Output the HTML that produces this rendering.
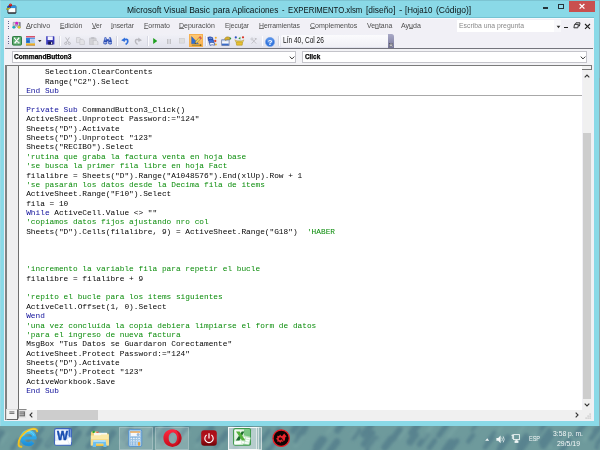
<!DOCTYPE html>
<html><head><meta charset="utf-8"><title>Microsoft Visual Basic para Aplicaciones</title>
<style>
html,body{margin:0;padding:0}
body{width:600px;height:450px;overflow:hidden;position:relative;background:#6e9a9c;font-family:"Liberation Sans",sans-serif}
div,span.a,svg{position:absolute;box-sizing:border-box}
.t{white-space:pre;line-height:1}
#frame{left:0;top:0;width:598.8px;height:425.8px;background:#8ad9e7;border-top:.8px solid #7cc4d2;border-left:.8px solid #9cdae6}
#client{left:4.4px;top:17.7px;width:589.5px;height:403.7px;background:#f1f0f6}
.menu{top:22px;font-size:7.3px;color:#4e4e4e;white-space:pre;line-height:1.15}
.menu u{text-decoration-thickness:.55px;text-underline-offset:.3px;text-decoration-color:#777}
#code{left:19.3px;top:65.8px;width:563.2px;height:344.4px;background:#fff}
.ln{left:6.9px;height:9.375px;font:7.8125px/9.375px "Liberation Mono",monospace;color:#050505;white-space:pre}
.k{color:#10109a}
.c{color:#0a8c0a}
.sep{width:1.6px;top:36.3px;height:9.4px;background:linear-gradient(90deg,#d6d7e2 0 50%,#fcfcfe 50% 100%)}
</style></head><body>
<div id="root" style="left:-6px;top:-6px;width:612px;height:462px;overflow:hidden;filter:blur(.35px);background:#6e9a9c">
<div style="left:0;top:0;width:612px;height:431.8px;background:#86b6c2"></div>
<div style="left:0;top:0;width:604.8px;height:431.8px;background:#8ad9e7"></div>
<div id="inner" style="left:6px;top:6px;width:600px;height:450px">
<div id="taskbar" style="left:0;top:425.8px;width:600px;height:24.2px;background:#6e9a9c;overflow:hidden">
<svg width="600" height="25" viewBox="0 0 600 25" style="left:0;top:0">
<defs><filter id="bl" x="-5%" y="-50%" width="110%" height="200%"><feGaussianBlur stdDeviation="1.6"/></filter></defs>
<g filter="url(#bl)"><g stroke="#4c7486" opacity=".62" fill="none" stroke-linecap="round"><path d="M-7.8 11.1 l5.5 -7.4" stroke-width="4.2"/><path d="M-18.4 15.8 l6.6 -8.7" stroke-width="5.5"/><path d="M-3.0 13.5 l5.1 -6.8" stroke-width="5.3"/><path d="M-7.9 22.2 l5.4 -7.2" stroke-width="5.9"/><path d="M26.8 16.7 l6.7 -8.9" stroke-width="4.1"/><path d="M12.2 22.9 l6.2 -8.3" stroke-width="4.4"/><path d="M33.9 22.0 l5.7 -7.6" stroke-width="5.9"/><path d="M35.0 12.2 l7.4 -9.9" stroke-width="4.2"/><path d="M47.8 19.0 l6.9 -9.1" stroke-width="5.8"/><path d="M57.3 14.0 l6.2 -8.3" stroke-width="6.1"/><path d="M71.5 16.6 l7.3 -9.8" stroke-width="6.2"/><path d="M67.1 10.3 l9.5 -12.7" stroke-width="5.3"/><path d="M88.2 7.3 l7.1 -9.5" stroke-width="6.0"/><path d="M88.1 20.8 l7.6 -10.1" stroke-width="4.9"/><path d="M105.2 17.1 l7.6 -10.1" stroke-width="6.5"/><path d="M101.9 24.8 l7.1 -9.4" stroke-width="4.2"/><path d="M128.0 18.2 l9.6 -12.8" stroke-width="4.9"/><path d="M122.7 12.5 l8.0 -10.7" stroke-width="5.4"/><path d="M150.6 6.6 l5.1 -6.8" stroke-width="4.4"/><path d="M149.7 9.4 l6.7 -8.9" stroke-width="4.2"/><path d="M161.1 16.1 l9.0 -12.1" stroke-width="6.6"/><path d="M160.1 10.1 l6.8 -9.1" stroke-width="6.7"/><path d="M182.3 7.3 l5.6 -7.5" stroke-width="4.7"/><path d="M177.2 14.7 l7.6 -10.2" stroke-width="4.0"/><path d="M204.1 12.1 l7.5 -10.0" stroke-width="6.1"/><path d="M198.4 15.3 l7.8 -10.4" stroke-width="4.2"/><path d="M216.6 21.2 l9.0 -12.0" stroke-width="5.2"/><path d="M220.9 12.8 l5.3 -7.1" stroke-width="4.2"/><path d="M234.1 8.6 l5.6 -7.4" stroke-width="4.2"/><path d="M234.7 4.0 l5.5 -7.4" stroke-width="5.1"/><path d="M234.1 23.2 l7.7 -10.3" stroke-width="4.8"/><path d="M242.4 11.6 l6.5 -8.7" stroke-width="6.5"/><path d="M262.0 14.3 l7.1 -9.5" stroke-width="4.3"/><path d="M272.9 11.5 l6.1 -8.1" stroke-width="4.5"/><path d="M267.9 24.9 l7.3 -9.8" stroke-width="5.6"/><path d="M293.1 4.6 l7.3 -9.8" stroke-width="6.6"/><path d="M298.8 9.7 l6.6 -8.7" stroke-width="6.3"/><path d="M296.3 15.7 l8.5 -11.4" stroke-width="4.7"/><path d="M314.8 25.7 l8.9 -11.9" stroke-width="6.5"/><path d="M315.4 20.3 l5.9 -7.9" stroke-width="5.1"/><path d="M337.3 4.6 l6.1 -8.2" stroke-width="6.1"/><path d="M330.1 25.0 l6.9 -9.3" stroke-width="7.0"/><path d="M353.0 12.0 l5.9 -7.8" stroke-width="4.6"/><path d="M363.7 8.5 l7.8 -10.4" stroke-width="6.5"/><path d="M363.8 18.4 l8.6 -11.5" stroke-width="6.0"/><path d="M367.6 24.0 l8.6 -11.4" stroke-width="5.4"/><path d="M384.8 21.4 l6.4 -8.5" stroke-width="6.9"/><path d="M393.0 12.7 l6.7 -9.0" stroke-width="6.2"/><path d="M411.5 6.8 l5.5 -7.4" stroke-width="6.4"/><path d="M412.1 7.2 l8.8 -11.7" stroke-width="6.0"/><path d="M410.0 16.1 l5.4 -7.2" stroke-width="6.9"/><path d="M419.4 18.3 l7.3 -9.8" stroke-width="5.3"/><path d="M429.1 22.2 l5.8 -7.8" stroke-width="4.9"/><path d="M438.9 9.3 l7.6 -10.2" stroke-width="5.3"/><path d="M444.4 24.0 l6.5 -8.7" stroke-width="5.8"/><path d="M450.0 23.9 l6.8 -9.1" stroke-width="5.5"/><path d="M468.3 15.5 l4.9 -6.5" stroke-width="4.5"/><path d="M473.7 4.1 l8.6 -11.5" stroke-width="5.4"/><path d="M488.3 16.2 l6.4 -8.5" stroke-width="5.7"/><path d="M485.0 21.3 l5.3 -7.1" stroke-width="4.7"/><path d="M500.7 21.0 l7.2 -9.6" stroke-width="6.3"/><path d="M499.0 24.1 l6.9 -9.2" stroke-width="5.5"/><path d="M519.3 19.2 l7.0 -9.3" stroke-width="5.4"/><path d="M519.3 24.7 l8.2 -10.9" stroke-width="6.8"/><path d="M540.5 16.3 l9.3 -12.4" stroke-width="4.4"/><path d="M538.5 6.7 l6.9 -9.2" stroke-width="4.7"/><path d="M553.0 18.7 l8.6 -11.4" stroke-width="4.5"/><path d="M543.2 19.8 l8.0 -10.6" stroke-width="6.6"/><path d="M576.2 8.8 l9.4 -12.5" stroke-width="5.5"/><path d="M560.6 25.8 l8.8 -11.7" stroke-width="5.3"/><path d="M590.9 11.5 l5.7 -7.7" stroke-width="6.2"/><path d="M597.6 4.4 l7.5 -9.9" stroke-width="4.1"/><path d="M599.1 17.7 l7.3 -9.7" stroke-width="7.0"/><path d="M596.9 21.3 l9.5 -12.6" stroke-width="4.8"/><path d="M610.7 21.1 l6.1 -8.1" stroke-width="5.3"/><path d="M610.1 24.1 l8.7 -11.6" stroke-width="4.4"/></g>
<g stroke="#7eaaa8" opacity=".5" fill="none" stroke-linecap="round"><path d="M0.7 17.4 l7.3 -9.8" stroke-width="2.6"/><path d="M17.6 19.8 l6.3 -8.4" stroke-width="2.6"/><path d="M47.7 18.7 l7.7 -10.2" stroke-width="2.6"/><path d="M84.5 7.3 l7.9 -10.5" stroke-width="3.2"/><path d="M99.2 17.1 l8.1 -10.8" stroke-width="2.9"/><path d="M119.2 16.5 l5.7 -7.5" stroke-width="2.7"/><path d="M146.3 7.0 l5.5 -7.4" stroke-width="3.0"/><path d="M157.3 21.2 l5.8 -7.8" stroke-width="3.3"/><path d="M183.6 12.9 l4.9 -6.5" stroke-width="2.9"/><path d="M196.0 20.7 l6.8 -9.0" stroke-width="2.8"/><path d="M216.7 24.7 l5.2 -6.9" stroke-width="3.7"/><path d="M246.5 15.9 l7.8 -10.4" stroke-width="3.1"/><path d="M267.7 19.8 l8.3 -11.1" stroke-width="3.0"/><path d="M295.4 20.1 l7.1 -9.5" stroke-width="3.1"/><path d="M327.3 7.1 l5.3 -7.0" stroke-width="2.6"/><path d="M351.2 11.1 l5.4 -7.2" stroke-width="2.6"/><path d="M370.1 23.4 l7.2 -9.6" stroke-width="2.9"/><path d="M399.6 11.9 l6.5 -8.6" stroke-width="2.7"/><path d="M423.4 11.3 l8.3 -11.0" stroke-width="4.0"/><path d="M448.3 10.9 l8.3 -11.0" stroke-width="3.0"/><path d="M474.2 6.0 l6.2 -8.2" stroke-width="3.2"/><path d="M495.2 10.0 l6.6 -8.8" stroke-width="2.5"/><path d="M518.1 7.8 l6.2 -8.3" stroke-width="2.6"/><path d="M533.1 12.1 l5.6 -7.5" stroke-width="3.4"/><path d="M550.8 21.0 l7.2 -9.6" stroke-width="3.6"/><path d="M584.7 13.8 l6.0 -8.0" stroke-width="4.0"/><path d="M599.5 20.5 l7.1 -9.5" stroke-width="2.6"/></g></g>
</svg></div>
<div style="left:598.8px;top:0;width:1.2px;height:426px;background:#86b6c2"></div>
<div style="left:598.8px;top:78px;width:1.2px;height:348px;background:#8faab0"></div>
<div id="frame"></div>
<div style="left:4px;top:16.9px;width:590.4px;height:.9px;background:#74c3d3"></div>
<div id="client"></div>
<div style="left:4.4px;top:17.7px;width:589.5px;height:1.2px;background:#f9f9fc"></div>
<div class="t" style="left:126.7px;top:5.6px;font-size:8.8px;color:#0c1416"><span id="ts0" style="display:inline-block;transform:scaleX(0.9663);transform-origin:0 0;">Microsoft Visual Basic</span> </div>
<div class="t" style="left:213.3px;top:5.6px;font-size:8.8px;color:#0c1416"><span id="ts1" style="display:inline-block;transform:scaleX(0.9597);transform-origin:0 0;">para</span> </div>
<div class="t" style="left:232.0px;top:5.6px;font-size:8.8px;color:#0c1416"><span id="ts2" style="display:inline-block;transform:scaleX(0.9374);transform-origin:0 0;">Aplicaciones</span> </div>
<div class="t" style="left:281.7px;top:5.6px;font-size:8.8px;color:#0c1416"><span id="ts3" style="display:inline-block;transform:scaleX(0.8511);transform-origin:0 0;">-</span> </div>
<div class="t" style="left:288.0px;top:5.6px;font-size:8.8px;color:#0c1416"><span id="ts4" style="display:inline-block;transform:scaleX(0.8791);transform-origin:0 0;">EXPERIMENTO.xlsm</span> </div>
<div class="t" style="left:365.7px;top:5.6px;font-size:8.8px;color:#0c1416"><span id="ts5" style="display:inline-block;transform:scaleX(0.9509);transform-origin:0 0;">[diseño]</span> </div>
<div class="t" style="left:399.0px;top:5.6px;font-size:8.8px;color:#0c1416"><span id="ts6" style="display:inline-block;transform:scaleX(1.1574);transform-origin:0 0;">-</span> </div>
<div class="t" style="left:405.0px;top:5.6px;font-size:8.8px;color:#0c1416"><span id="ts7" style="display:inline-block;transform:scaleX(0.9035);transform-origin:0 0;">[Hoja10</span> </div>
<div class="t" style="left:436.0px;top:5.6px;font-size:8.8px;color:#0c1416"><span id="ts8" style="display:inline-block;transform:scaleX(0.9727);transform-origin:0 0;">(Código)]</span> </div>
<svg style="left:5.5px;top:3px" width="11" height="11" viewBox="0 0 11 11">
<rect x="1.9" y="3" width="8" height="7.2" rx=".6" fill="#fdfdfd" stroke="#2a3038" stroke-width=".9"/>
<rect x="3.4" y="2.8" width="6.6" height="2.3" fill="#2a8fe0"/>
<rect x="1.9" y="9.4" width="8" height="1" fill="#20242a"/>
<path d="M.4 5.8 L3.6 4.2 L4.2 5.4 L1 7z" fill="#e6d616" stroke="#4a4a10" stroke-width=".35"/>
<circle cx="2.6" cy="3.8" r="1.1" fill="#1c3cc8"/>
<circle cx="4.5" cy="2" r="1.55" fill="#cc1414"/><circle cx="4.2" cy="1.6" r=".5" fill="#f06060"/>
<path d="M3.4 3.4 L5 4.4" stroke="#101010" stroke-width=".7"/>
</svg>
<div style="left:568.5px;top:.8px;width:26.2px;height:11px;background:#c9504f"></div>
<svg style="left:577.5px;top:3px" width="8" height="7" viewBox="0 0 8 7"><path d="M1.6 1 L6.4 5.6 M6.4 1 L1.6 5.6" stroke="#fff" stroke-width="1.3" fill="none"/></svg>
<div style="left:558px;top:4px;width:6px;height:4.8px;border:.9px solid #25343a;border-top-width:1.6px;background:#8fdcec"></div>
<div style="left:542.6px;top:7.2px;width:5px;height:1.5px;background:#25343a"></div>
<div style="left:8.2px;top:21px;width:1.1px;height:9px;background:repeating-linear-gradient(#62628c 0 1.1px,transparent 1.1px 2.3px)"></div>
<svg style="left:11.6px;top:21px" width="9" height="8.4" viewBox="0 0 9 8.4">
<path d="M1.2 1.4 H7.8 V7 H6 L4.6 4.4 L3.2 7 H1.2z" fill="#d4d4dc" stroke="#7a7a8c" stroke-width=".6"/>
<path d="M8 1.2 V7.2" stroke="#3a3a4a" stroke-width=".7"/>
<path d="M4.7 2.3 L1.8 6.3 M4.7 2.3 L7.1 6.2" stroke="#55555f" stroke-width=".6"/>
<circle cx="4.7" cy="2.2" r="1.4" fill="#d418cc"/><circle cx="1.7" cy="6.3" r="1.3" fill="#12b4c4"/><circle cx="7.1" cy="6.2" r="1.3" fill="#dcd418"/>
</svg>
<div class="menu" id="m0" style="display:inline-block;transform:scaleX(0.9941);transform-origin:0 0;left:26.0px"><u>A</u>rchivo</div>
<div class="menu" id="m1" style="display:inline-block;transform:scaleX(0.9268);transform-origin:0 0;left:60.0px"><u>E</u>dición</div>
<div class="menu" id="m2" style="display:inline-block;transform:scaleX(0.9117);transform-origin:0 0;left:91.7px"><u>V</u>er</div>
<div class="menu" id="m3" style="display:inline-block;transform:scaleX(0.9253);transform-origin:0 0;left:111.3px"><u>I</u>nsertar</div>
<div class="menu" id="m4" style="display:inline-block;transform:scaleX(0.9563);transform-origin:0 0;left:143.7px"><u>F</u>ormato</div>
<div class="menu" id="m5" style="display:inline-block;transform:scaleX(0.9587);transform-origin:0 0;left:179.2px"><u>D</u>epuración</div>
<div class="menu" id="m6" style="display:inline-block;transform:scaleX(0.8956);transform-origin:0 0;left:224.7px">Ejecu<u>t</u>ar</div>
<div class="menu" id="m7" style="display:inline-block;transform:scaleX(0.9358);transform-origin:0 0;left:258.7px"><u>H</u>erramientas</div>
<div class="menu" id="m8" style="display:inline-block;transform:scaleX(0.9635);transform-origin:0 0;left:309.7px"><u>C</u>omplementos</div>
<div class="menu" id="m9" style="display:inline-block;transform:scaleX(0.9441);transform-origin:0 0;left:366.7px">Ve<u>n</u>tana</div>
<div class="menu" id="m10" style="display:inline-block;transform:scaleX(0.9670);transform-origin:0 0;left:401.3px">Ay<u>u</u>da</div>
<div style="left:456.5px;top:19.6px;width:104.5px;height:12px;background:#f8f8fb"></div>
<div style="left:456.5px;top:19.6px;width:97.5px;height:12px;background:#fff"></div>
<div class="t" id="ask" style="display:inline-block;transform:scaleX(0.9513);transform-origin:0 0;left:459px;top:21.8px;font-size:7.2px;color:#8a8a8a">Escriba una pregunta</div>
<svg style="left:555.5px;top:24.5px" width="5" height="4" viewBox="0 0 5 4"><path d="M.6 .8 H4.4 L2.5 3.2z" fill="#333"/></svg>
<div style="left:564px;top:27px;width:4px;height:1.3px;background:#222"></div>
<svg style="left:572.5px;top:22.3px" width="8" height="7" viewBox="0 0 8 7"><path d="M2.4 2.2 L3 .8 H7 L6.4 4 H5.2 M.9 5.8 L1.5 2.4 H5.4 L4.8 5.8z" stroke="#222" stroke-width=".9" fill="none"/></svg>
<svg style="left:584.2px;top:22.6px" width="7" height="7" viewBox="0 0 7 7"><path d="M1 1 L6 5.8 M6 1 L1 5.8" stroke="#222" stroke-width="1.1" fill="none"/></svg>
<div style="left:4.5px;top:33.6px;width:389.3px;height:14.2px;background:linear-gradient(#f1f1f7,#e1e2ec);border-radius:0 2.5px 0 0"></div>
<div style="left:387.5px;top:33.6px;width:6.3px;height:14.2px;background:linear-gradient(#a9a9c6,#77779a);border-radius:0 2.5px 0 0"></div>
<svg style="left:388.5px;top:43px" width="4" height="4" viewBox="0 0 4 4"><rect x=".3" y=".3" width="3.4" height="3.4" fill="#eee" stroke="#334" stroke-width=".5"/><path d="M1 1.5 H3 L2 2.8z" fill="#223"/></svg>
<div style="left:8.4px;top:36.2px;width:1.1px;height:9px;background:repeating-linear-gradient(#62628c 0 1.1px,transparent 1.1px 2.3px)"></div>
<div class="sep" style="left:59.2px"></div>
<div class="sep" style="left:116.2px"></div>
<div class="sep" style="left:147.2px"></div>
<div class="sep" style="left:205.0px"></div>
<div class="sep" style="left:261.7px"></div>
<div class="sep" style="left:278.2px"></div>
<svg style="left:12.0px;top:36.0px" width="10" height="9.6" viewBox="0 0 10 9.6"><rect x=".5" y=".5" width="9" height="8.6" rx=".8" fill="#55a868" stroke="#2f7a40" stroke-width="1"/>
<path d="M1.5 5.2 H8.5 M1.5 7 H8.5 M5 4 V8.4" stroke="#9fd0aa" stroke-width=".5"/>
<path d="M2.2 1.8 L7.4 7.2 M7.2 1.6 L2.6 7.4" stroke="#fff" stroke-width="1.5"/><path d="M3.2 2 L7.2 6.6" stroke="#2f7a40" stroke-width=".5"/></svg>
<svg style="left:25.5px;top:36.0px" width="9.6" height="9.6" viewBox="0 0 9.6 9.6"><rect x="0" y="0" width="9.6" height="9.6" fill="#2f7ddc"/>
<rect x="0" y="0" width="9.6" height="1.6" fill="#d8506a"/><rect x="0" y="1.5" width="9.6" height=".5" fill="#f0d0d8"/>
<rect x="4.2" y="3" width="4.6" height="3.6" fill="#a8c8f0" stroke="#e8f0ff" stroke-width=".5"/><rect x="1" y="4.6" width="2.4" height="1.6" fill="#1e5cb8"/>
<rect x="0" y="7.4" width="9.6" height="2.2" fill="#f0a828"/><rect x="0" y="7.2" width="9.6" height=".6" fill="#f8e070"/></svg>
<svg style="left:38.4px;top:40.0px" width="3.6" height="2.2" viewBox="0 0 3.6 2.2"><path d="M0 .1 H3.6 L1.8 2.1z" fill="#333"/></svg>
<svg style="left:46.0px;top:36.4px" width="8.6" height="8.8" viewBox="0 0 8.6 8.8"><rect x=".2" y=".2" width="8.2" height="8.4" rx=".6" fill="#3a3ab8"/>
<rect x="1.6" y=".4" width="5.2" height="3.6" fill="#f4f4fc"/><rect x="2.2" y="5.6" width="4.6" height="3" fill="#1a1a50"/><rect x="5" y="6.2" width="1.2" height="2" fill="#d8d8e8"/>
<rect x="0.2" y=".2" width="1" height="8.4" fill="#5a5ad0" opacity=".6"/></svg>
<svg style="left:63.6px;top:36.8px" width="7" height="8" viewBox="0 0 7 8"><g stroke="#b2b2b8" fill="none" stroke-width=".85"><path d="M1.6 .4 L4.8 5.6 M5.4 .4 L2.2 5.6"/><circle cx="1.7" cy="6.4" r="1.1"/><circle cx="5.3" cy="6.4" r="1.1"/></g></svg>
<svg style="left:76.4px;top:37.0px" width="9" height="8" viewBox="0 0 9 8"><g fill="#e2e2e6" stroke="#c6c6cc" stroke-width=".7"><path d="M.5 .5 H3.6 L5 1.9 V5.6 H.5z"/><path d="M3.8 2.4 H6.9 L8.4 3.8 V7.5 H3.8z"/></g></svg>
<svg style="left:89.4px;top:36.6px" width="9.4" height="8.6" viewBox="0 0 9.4 8.6"><rect x=".5" y="1" width="6.6" height="6.8" rx=".5" fill="#d2d2d6" stroke="#c0c0c6" stroke-width=".6"/><rect x="2.2" y=".2" width="3.2" height="1.6" fill="#bcbcc2"/>
<path d="M4.2 3.4 H7.4 L8.9 4.8 V8.2 H4.2z" fill="#e4e4e8" stroke="#b8b8c0" stroke-width=".6"/></svg>
<svg style="left:102.8px;top:37.2px" width="9.4" height="7.6" viewBox="0 0 9.4 7.6"><g fill="#2a4cb4"><path d="M1.2 1.4 Q1.2 .2 2.4 .2 Q3.6 .2 3.6 1.4 L4.3 6 Q4.3 7.4 2.3 7.4 Q.2 7.4 .2 6z"/>
<path d="M5.8 1.4 Q5.8 .2 7 .2 Q8.2 .2 8.2 1.4 L9.2 6 Q9.2 7.4 7.1 7.4 Q5.1 7.4 5.1 6z"/><rect x="3.6" y="2.2" width="2.2" height="2.2"/></g>
<rect x="1.7" y="1" width=".9" height="2.4" fill="#c8d8ff"/><rect x="6.3" y="1" width=".9" height="2.4" fill="#c8d8ff"/><rect x=".8" y="5.4" width="2.8" height=".9" fill="#e8f0ff"/><rect x="5.8" y="5.4" width="2.8" height=".9" fill="#e8f0ff"/></svg>
<svg style="left:120.6px;top:36.8px" width="8.2" height="8" viewBox="0 0 8.2 8"><path d="M2.2 3.2 Q6.8 1.2 6.8 4.2 Q6.8 6.4 4.6 7.4" fill="none" stroke="#2f6fdc" stroke-width="1.7"/><path d="M.2 3.2 L4 .4 L3.8 5z" fill="#2f6fdc"/></svg>
<svg style="left:133.8px;top:36.8px" width="8.2" height="8" viewBox="0 0 8.2 8"><path d="M6 3.2 Q1.4 1.2 1.4 4.2 Q1.4 6.4 3.6 7.4" fill="none" stroke="#b8b8be" stroke-width="1.5"/><path d="M8 3.2 L4.2 .4 L4.4 5z" fill="#b8b8be"/></svg>
<svg style="left:152.8px;top:38.3px" width="4.4" height="6" viewBox="0 0 4.4 6"><path d="M.2 .1 L4.2 3 L.2 5.9z" fill="#1fa01f"/></svg>
<svg style="left:166.5px;top:38.5px" width="4.2" height="5.6" viewBox="0 0 4.2 5.6"><rect x="0" y="0" width="1.5" height="5.6" fill="#c2c2c6"/><rect x="2.6" y="0" width="1.5" height="5.6" fill="#c2c2c6"/></svg>
<svg style="left:179.4px;top:38.4px" width="5.8" height="5.4" viewBox="0 0 5.8 5.4"><rect x=".3" y=".3" width="5.2" height="4.8" fill="#dededf" stroke="#c8c8cc" stroke-width=".6"/></svg>
<div style="left:189px;top:34px;width:14px;height:13.4px;background:linear-gradient(#fdc877,#fbb048);border:.7px solid #f6b050"></div>
<svg style="left:190.5px;top:35.6px" width="11" height="10.6" viewBox="0 0 11 10.6"><path d="M.6 .6 V7.8 H7.4z" fill="#2f6fd4" stroke="#2458b0" stroke-width=".4"/>
<path d="M9 .4 L10.6 2 L5.8 7 L3.8 7.8 L4.4 5.8z" fill="#f0d060" stroke="#6a5a20" stroke-width=".4"/><path d="M7.8 1.6 L9 .4 L10.6 2 L9.4 3.2z" fill="#e04860"/><path d="M3.8 7.8 L4.2 6.6 L5 7.3z" fill="#222"/>
<rect x=".8" y="8.7" width="9.2" height="1.1" fill="#a88a28"/><circle cx="9.6" cy="9.2" r=".9" fill="#7a6420"/></svg>
<svg style="left:207.4px;top:36.0px" width="10.4" height="10" viewBox="0 0 10.4 10"><path d="M.8 1.4 Q3 .2 5.6 1.6 L6.2 4.4 Q3.4 3.2 1.4 4.4z" fill="#2a56c0" stroke="#1a3690" stroke-width=".5"/>
<path d="M1.6 4 Q4 3 6.8 4.4 L7 7 Q4.4 5.8 2.2 7z" fill="#3f74dc" stroke="#1a3690" stroke-width=".5"/><path d="M2.4 6.8 Q5 5.8 7.6 7 L7.6 9.2 Q5 8.2 3 9.4z" fill="#eef4ff" stroke="#1a3690" stroke-width=".6"/>
<path d="M2 2.4 Q3.4 1.8 5 2.4" stroke="#cfe0ff" stroke-width=".5" fill="none"/>
<circle cx="8.8" cy="1.8" r="1.05" fill="#f0b030"/><circle cx="8.3" cy="5" r="1.15" fill="#e04828"/><circle cx="8.9" cy="8.4" r="1" fill="#f0b030"/></svg>
<svg style="left:221.2px;top:36.0px" width="10.6" height="10" viewBox="0 0 10.6 10"><rect x=".7" y="3.8" width="7.4" height="5.8" fill="#f6f8fc" stroke="#5a6c98" stroke-width=".7"/><rect x="1" y="7.6" width="6.8" height="1.7" fill="#3a6cc8"/><rect x="1" y="4.1" width="6.8" height="1.1" fill="#a8bce0"/>
<path d="M3.6 2.6 Q5 .4 7.4 .9 L9 1.6 L8.8 3.8 L6.2 3.6 L4.4 4.4z" fill="#d8b030" stroke="#7a6010" stroke-width=".4"/><path d="M8.8 1 L10.4 2.4 L8.8 3.9z" fill="#2a9a3a"/></svg>
<svg style="left:234.4px;top:36.0px" width="10.8" height="10" viewBox="0 0 10.8 10"><path d="M2 5 H8.8 L8.2 9.2 H2.6z" fill="#e8c030" stroke="#a88a18" stroke-width=".5"/><path d="M.8 3.8 L3.2 5.2 H7.6 L10 3.8 L8.8 6 H2z" fill="#f8e478" stroke="#a88a18" stroke-width=".4"/>
<circle cx="1.8" cy="1.4" r="1.1" fill="#2a50c0"/><path d="M4.4 2.4 L6.4 .8 V3.6z" fill="#2a9a3a"/><circle cx="9" cy="1.3" r="1.1" fill="#d83020"/></svg>
<svg style="left:249.6px;top:37.0px" width="8" height="8" viewBox="0 0 8 8"><g stroke="#c2c2c8" stroke-width="1" fill="none"><path d="M1.6 6.6 L5.6 2.2"/><path d="M6.2 6.6 L2.4 2.6"/></g><path d="M4.4 .8 L7 1.6 L5.8 3.2z" fill="#bcbcc2"/><circle cx="2" cy="2" r="1.1" fill="none" stroke="#c4c4ca" stroke-width=".8"/></svg>
<svg style="left:265.2px;top:36.6px" width="10" height="10" viewBox="0 0 10 10"><circle cx="5" cy="5" r="4.6" fill="#3576dc" stroke="#7aa6ea" stroke-width=".6"/><circle cx="5" cy="3.6" r="3.2" fill="#6ea4f4" opacity=".55"/>
<text x="5" y="7.7" font-family="Liberation Sans, sans-serif" font-weight="bold" font-size="7.6" fill="#fff" text-anchor="middle">?</text></svg>
<div style="left:281px;top:35px;width:106.5px;height:11.8px;background:linear-gradient(#fbfbfd,#f0f0f6);border-radius:1.5px 0 0 1.5px"></div>
<div class="t" id="lin" style="left:283.3px;top:37.2px;font-size:8.2px;color:#111;transform:scaleX(.802);transform-origin:0 0">Lín 40, Col 26</div>
<div style="left:4.5px;top:47.6px;width:588px;height:1.5px;background:#74747c"></div>
<div style="left:4.5px;top:49px;width:589.8px;height:16.3px;background:#f3f3f6"></div>
<div style="left:11.7px;top:51px;width:284.5px;height:12.4px;background:#fff;border:.8px solid #c4c4ca"></div>
<div style="left:302px;top:51px;width:284.8px;height:12.4px;background:#fff;border:.8px solid #c4c4ca"></div>
<div class="t" id="cb1" style="display:inline-block;transform:scaleX(0.9628);transform-origin:0 0;left:14.2px;top:54.1px;font-size:6.9px;font-weight:bold;color:#000;-webkit-text-stroke:.25px #000">CommandButton3</div>
<div class="t" id="cb2" style="display:inline-block;transform:scaleX(0.9221);transform-origin:0 0;left:304.6px;top:54.1px;font-size:6.9px;font-weight:bold;color:#000;-webkit-text-stroke:.25px #000">Click</div>
<svg style="left:288.8px;top:55.6px" width="6" height="4" viewBox="0 0 6 4"><path d="M.7 .6 L3 2.9 L5.3 .6" stroke="#333" stroke-width="1" fill="none"/></svg>
<svg style="left:579.5px;top:55.6px" width="6" height="4" viewBox="0 0 6 4"><path d="M.7 .6 L3 2.9 L5.3 .6" stroke="#333" stroke-width="1" fill="none"/></svg>
<div style="left:5.3px;top:65px;width:587px;height:1px;background:#7a7a7a"></div>
<div style="left:5.4px;top:65px;width:1.2px;height:354.6px;background:#808080"></div>
<div style="left:6.6px;top:66px;width:11.6px;height:344px;background:#efeff0"></div>
<div style="left:18.1px;top:66px;width:1.2px;height:344px;background:#6e6e6e"></div>
<div id="code">
<div style="left:0;top:29.4px;width:563px;height:.9px;background:#a8a8a8"></div>
<div class="ln" style="top:1.70px">    Selection.ClearContents</div>
<div class="ln" style="top:11.07px">    Range("C2").Select</div>
<div class="ln" style="top:20.45px"><span class="k">End Sub</span></div>
<div class="ln" style="top:39.20px"><span class="k">Private Sub</span> CommandButton3_Click()</div>
<div class="ln" style="top:48.58px">ActiveSheet.Unprotect Password:="124"</div>
<div class="ln" style="top:57.95px">Sheets("D").Activate</div>
<div class="ln" style="top:67.33px">Sheets("D").Unprotect "123"</div>
<div class="ln" style="top:76.70px">Sheets("RECIBO").Select</div>
<div class="ln" style="top:86.08px"><span class="c">'rutina que graba la factura venta en hoja base</span></div>
<div class="ln" style="top:95.45px"><span class="c">'se busca la primer fila libre en hoja Fact</span></div>
<div class="ln" style="top:104.83px">filalibre = Sheets("D").Range("A1048576").End(xlUp).Row + 1</div>
<div class="ln" style="top:114.20px"><span class="c">'se pasarán los datos desde la Decima fila de items</span></div>
<div class="ln" style="top:123.58px">ActiveSheet.Range("F10").Select</div>
<div class="ln" style="top:132.95px">fila = 10</div>
<div class="ln" style="top:142.32px"><span class="k">While</span> ActiveCell.Value &lt;&gt; ""</div>
<div class="ln" style="top:151.70px"><span class="c">'copiamos datos fijos ajustando nro col</span></div>
<div class="ln" style="top:161.07px">Sheets("D").Cells(filalibre, 9) = ActiveSheet.Range("G18")  <span class="c">'HABER</span></div>
<div class="ln" style="top:198.57px"><span class="c">'incremento la variable fila para repetir el bucle</span></div>
<div class="ln" style="top:207.95px">filalibre = filalibre + 9</div>
<div class="ln" style="top:226.70px"><span class="c">'repito el bucle para los items siguientes</span></div>
<div class="ln" style="top:236.07px">ActiveCell.Offset(1, 0).Select</div>
<div class="ln" style="top:245.45px"><span class="k">Wend</span></div>
<div class="ln" style="top:254.82px"><span class="c">'una vez concluída la copia debiera limpiarse el form de datos</span></div>
<div class="ln" style="top:264.20px"><span class="c">'para el ingreso de nueva factura</span></div>
<div class="ln" style="top:273.57px">MsgBox "Tus Datos se Guardaron Corectamente"</div>
<div class="ln" style="top:282.95px">ActiveSheet.Protect Password:="124"</div>
<div class="ln" style="top:292.32px">Sheets("D").Activate</div>
<div class="ln" style="top:301.70px">Sheets("D").Protect "123"</div>
<div class="ln" style="top:311.07px">ActiveWorkbook.Save</div>
<div class="ln" style="top:320.45px"><span class="k">End Sub</span></div>
</div>
<div style="left:582.5px;top:65.8px;width:9.3px;height:344.4px;background:#f0f0f0"></div>
<div style="left:582.3px;top:65.8px;width:9.5px;height:4.2px;background:#f4f4f4;border:.9px solid #777;border-top:none;border-left:none"></div>
<div style="left:583px;top:132.5px;width:8.4px;height:266.8px;background:#cdcdcd"></div>
<svg style="left:583.8px;top:74px" width="6" height="4" viewBox="0 0 6 4"><path d="M.7 3.3 L3 1 L5.3 3.3" stroke="#333" stroke-width="1.1" fill="none"/></svg>
<svg style="left:583.8px;top:403.3px" width="6" height="4" viewBox="0 0 6 4"><path d="M.7 .7 L3 3 L5.3 .7" stroke="#333" stroke-width="1.1" fill="none"/></svg>
<div style="left:6.2px;top:410.2px;width:585.6px;height:9.6px;background:#f0f0f0"></div>
<div style="left:37px;top:410.2px;width:61px;height:9.6px;background:#cdcdcd"></div>
<svg style="left:29px;top:412px" width="4" height="6" viewBox="0 0 4 6"><path d="M3.3 .7 L1 3 L3.3 5.3" stroke="#333" stroke-width="1.1" fill="none"/></svg>
<svg style="left:575px;top:412px" width="4" height="6" viewBox="0 0 4 6"><path d="M.7 .7 L3 3 L.7 5.3" stroke="#333" stroke-width="1.1" fill="none"/></svg>
<div style="left:6.2px;top:408.6px;width:11.4px;height:11px;background:#f4f4f4;border:1px solid #666;border-top-color:#ddd;border-left-color:#ddd"></div>
<div style="left:18px;top:408.6px;width:9.4px;height:10.4px;background:#e4e4e4;border:1px solid #888;border-bottom-color:#eee;border-right-color:#eee"></div>
<svg style="left:8.8px;top:411.2px" width="6" height="4" viewBox="0 0 6 4"><path d="M.4 .9 H5.4 M.4 2.4 H5.4" stroke="#4a4a4a" stroke-width=".8"/></svg>
<svg style="left:19px;top:411px" width="7" height="6" viewBox="0 0 7 6"><path d="M.4 1 H5.6 M.4 2.9 H5.6 M.4 4.8 H5.6" stroke="#4a4a4a" stroke-width=".9"/><path d="M5.4 .6 V5.2" stroke="#555" stroke-width=".8"/></svg>
<svg style="left:583.5px;top:411.5px" width="8" height="8" viewBox="0 0 8 8"><g fill="#bdbdbd"><rect x="5.5" y="5.5" width="1.2" height="1.2"/><rect x="3.5" y="5.5" width="1.2" height="1.2"/><rect x="5.5" y="3.5" width="1.2" height="1.2"/><rect x="1.5" y="5.5" width="1.2" height="1.2"/><rect x="5.5" y="1.5" width="1.2" height="1.2"/><rect x="3.5" y="3.5" width="1.2" height="1.2"/></g></svg>
<div style="left:118.9px;top:427.2px;width:33.8px;height:23px;background:rgba(255,255,255,.16);border:.7px solid rgba(255,255,255,.22)"></div>
<div style="left:154.7px;top:427.2px;width:34.3px;height:23px;background:rgba(255,255,255,.16);border:.7px solid rgba(255,255,255,.22)"></div>
<div style="left:228px;top:427.2px;width:34px;height:23px;background:rgba(255,255,255,.28);border:.7px solid rgba(255,255,255,.5)"></div>
<div style="left:228px;top:427.2px;width:31px;height:23px;background:rgba(255,255,255,.12);border:.7px solid rgba(255,255,255,.5)"></div>
<div style="left:228px;top:427.2px;width:28.7px;height:23px;background:rgba(255,255,255,.22);border:.7px solid rgba(255,255,255,.55)"></div>
<svg style="left:16.6px;top:427.0px" width="22" height="21.4" viewBox="0 0 22 21.4"><defs><linearGradient id="ieg" x1="0" y1="0" x2="0" y2="1"><stop offset="0" stop-color="#48c4f4"/><stop offset="1" stop-color="#1c90dc"/></linearGradient></defs>
<path d="M17.5 11 A6.2 6.2 0 1 0 15.9 15.1" fill="none" stroke="url(#ieg)" stroke-width="4"/>
<rect x="5.4" y="9.6" width="14.1" height="2.9" fill="#2ea6e8"/>
<path d="M5 8.6 A6.4 6.4 0 0 1 17 8.6" fill="none" stroke="#8fe0fa" stroke-width=".7" opacity=".8"/>
<path d="M20.2 4.4 C20 -.8 8.4 2 3.4 10.6 C.4 16 1.2 20 4.4 19.8" fill="none" stroke="#f2c21e" stroke-width="1.9" stroke-linecap="round"/>
<path d="M19.2 3.4 C18 .8 10 2.6 5.4 9.4" fill="none" stroke="#f8e070" stroke-width=".6"/></svg>
<svg style="left:53.6px;top:428.4px" width="18.4" height="18" viewBox="0 0 18.4 18"><defs><linearGradient id="wg" x1="0" y1="0" x2="1" y2="1"><stop offset="0" stop-color="#ffffff"/><stop offset=".6" stop-color="#d4e4fa"/><stop offset="1" stop-color="#9cbcec"/></linearGradient></defs>
<rect x=".6" y=".6" width="17" height="16.6" rx="1.8" fill="url(#wg)" stroke="#3c64bc" stroke-width="1.1"/>
<path d="M14.6 1.2 H16.6 V10 L14.6 8z" fill="#3466c4"/>
<path d="M1.2 13 L12 11.4 L17 9.6 V16.6 H1.2z" fill="#fdfeff"/><path d="M13 10.6 L17.2 9.4 V14 L15.4 16.4z" fill="#fff" stroke="#b4c8ec" stroke-width=".3"/>
<text x="8.6" y="12.5" font-family="Liberation Sans, sans-serif" font-weight="bold" font-size="12.8" fill="#174cb0" stroke="#174cb0" stroke-width=".45" text-anchor="middle" textLength="11" lengthAdjust="spacingAndGlyphs">W</text></svg>
<svg style="left:90.0px;top:429.6px" width="19.6" height="17.6" viewBox="0 0 19.6 17.6"><path d="M1 3 Q1 1.6 2.4 1.6 H7.6 L9.4 3.4 H17.6 Q18.8 3.4 18.8 4.6 V15 H1z" fill="#f0d478"/>
<rect x="2.6" y=".8" width="2.2" height="2.2" fill="#2aa838"/><rect x="6.4" y="1.8" width="2.2" height="2.2" fill="#d84030"/><rect x="11.6" y="2.6" width="2.4" height="2.2" fill="#3a98e0"/>
<rect x="4" y="2.8" width="13" height="3" fill="#f8f8f0"/>
<path d="M.8 5.6 H10 L11.4 4.6 H18.8 V15.4 H.8z" fill="#fbeaa8"/><path d="M.8 9 H18.8 V15.4 H.8z" fill="#f6da84" opacity=".8"/>
<path d="M3.4 10.2 H15.6 L16.6 17.2 H13.4 V13.4 H6 V17.2 H2.6z" fill="#6cc0f0"/><path d="M3.4 10.2 H15.6 L15.8 11.8 H3.2z" fill="#c4e8fc"/><rect x="6" y="14.4" width="7.4" height="1.6" fill="#f0c040"/></svg>
<svg style="left:128.4px;top:429.0px" width="14.4" height="18.2" viewBox="0 0 14.4 18.2"><rect x=".6" y=".6" width="13.2" height="17" rx="1.6" fill="#a8d0f0" stroke="#5a94cc" stroke-width="1"/>
<rect x="2.2" y="2.4" width="10" height="5" fill="#f4f8fc" stroke="#88b0d8" stroke-width=".4"/><rect x="2.2" y="2.4" width="10" height="1.3" fill="#f0a040"/>
<circle cx="10.2" cy="5.4" r="1.5" fill="#9ab8d8"/>
<g fill="#e4f0fa" stroke="#78a8d4" stroke-width=".35"><rect x="2.2" y="8.8" width="2.2" height="1.7"/><rect x="4.8" y="8.8" width="2.2" height="1.7"/><rect x="7.4" y="8.8" width="2.2" height="1.7"/><rect x="10" y="8.8" width="2.2" height="1.7"/>
<rect x="2.2" y="11" width="2.2" height="1.7"/><rect x="4.8" y="11" width="2.2" height="1.7"/><rect x="7.4" y="11" width="2.2" height="1.7"/><rect x="10" y="11" width="2.2" height="1.7"/>
<rect x="2.2" y="13.2" width="2.2" height="1.7"/><rect x="4.8" y="13.2" width="2.2" height="1.7"/><rect x="7.4" y="13.2" width="2.2" height="1.7"/>
<rect x="2.2" y="15.2" width="2.2" height="1.4"/><rect x="4.8" y="15.2" width="2.2" height="1.4"/><rect x="7.4" y="15.2" width="2.2" height="1.4"/></g>
<rect x="10" y="13.2" width="2.2" height="3.4" fill="#f0a030"/></svg>
<svg style="left:163.0px;top:429.0px" width="19" height="18.2" viewBox="0 0 19 18.2"><defs><linearGradient id="og" x1="0" y1="0" x2="0" y2="1"><stop offset="0" stop-color="#ff2840"/><stop offset="1" stop-color="#c80c1c"/></linearGradient></defs>
<path fill-rule="evenodd" d="M9.4 .3 C14.6 .3 18.5 4.2 18.5 9.1 C18.5 14 14.6 17.9 9.4 17.9 C4.2 17.9 .4 14 .4 9.1 C.4 4.2 4.2 .3 9.4 .3z M9.8 3.6 C7.4 3.6 5.7 6 5.7 9.1 C5.7 12.2 7.4 14.7 9.8 14.7 C12.2 14.7 14 12.2 14 9.1 C14 6 12.2 3.6 9.8 3.6z" fill="url(#og)"/>
<path d="M12.6 1 C16 2.2 18.5 5.2 18.5 9.1 C18.5 13 16 16 12.6 17.2 C14.6 15.4 15.8 12.6 15.8 9.1 C15.8 5.6 14.6 2.8 12.6 1z" fill="#a00814" opacity=".55"/></svg>
<svg style="left:200.6px;top:430.2px" width="16" height="16" viewBox="0 0 16 16"><defs><linearGradient id="pg" x1="0" y1="0" x2="0" y2="1"><stop offset="0" stop-color="#a80c14"/><stop offset=".5" stop-color="#b4141e"/><stop offset="1" stop-color="#6c0206"/></linearGradient></defs>
<rect x=".2" y=".2" width="15.6" height="15.6" rx="3" fill="url(#pg)"/>
<path d="M5.6 5 A4.2 4.2 0 1 0 10.4 5" fill="none" stroke="#fff" stroke-width="1.1"/><path d="M8 3.2 V8.6" stroke="#fff" stroke-width="1.2"/></svg>
<svg style="left:232.8px;top:428.4px" width="18.6" height="18" viewBox="0 0 18.6 18"><defs><linearGradient id="xg" x1="0" y1="0" x2="1" y2="1"><stop offset="0" stop-color="#ffffff"/><stop offset=".55" stop-color="#cfeacf"/><stop offset="1" stop-color="#6cbc74"/></linearGradient></defs>
<rect x=".6" y=".6" width="17" height="16.6" rx="1.8" fill="url(#xg)" stroke="#3f9a4c" stroke-width="1.1"/>
<path d="M11 1.2 H17 V8.6 L11 7.4z" fill="#5cb868" opacity=".75"/>
<path d="M1.2 13.4 L10 12.4 V16.6 H1.2z" fill="#fbfffb"/>
<path d="M9.6 8.4 L17.6 9.8 L15.8 16.4 L8.4 15.4z" fill="#fdfffd" stroke="#a8d4ac" stroke-width=".35"/><path d="M10.4 10.6 L16.6 11.8 M9.6 13 L16 14.2 M12.6 9.2 L11.4 15.6" stroke="#8cc894" stroke-width=".4"/>
<path d="M8.8 3.4 H11.4 L6.4 12.6 H2.8z" fill="#1c6c2c"/><path d="M3 3.4 H6.6 L12.4 12.6 H9z" fill="#54b03c"/></svg>
<svg style="left:272.2px;top:429.0px" width="18.4" height="18.4" viewBox="0 0 18.4 18.4"><circle cx="9.2" cy="9.2" r="8.2" fill="#100404" stroke="#e81c24" stroke-width="1.3"/>
<path d="M8.20 5.60 L9.35 7.03 L11.17 6.83 L10.97 8.65 L12.40 9.80 L10.97 10.95 L11.17 12.77 L9.35 12.57 L8.20 14.00 L7.05 12.57 L5.23 12.77 L5.43 10.95 L4.00 9.80 L5.43 8.65 L5.23 6.83 L7.05 7.03z" fill="#e8242c"/><circle cx="8.2" cy="9.8" r="1.5" fill="#2a0808"/>
<path d="M10.6 6.6 L12.2 4.6 L14.6 7.4 L13.4 8 L12.8 11.4 L10.6 12.6z" fill="#e8242c"/><path d="M9.4 9 L11.2 12" stroke="#100404" stroke-width=".8"/></svg>
<svg style="left:485.0px;top:437.6px" width="4.4" height="3" viewBox="0 0 4.4 3"><path d="M.2 2.8 L2.2 .2 L4.2 2.8z" fill="#f0f6f6"/></svg>
<svg style="left:496.2px;top:434.6px" width="9.4" height="8.8" viewBox="0 0 9.4 8.8"><path d="M.4 3 H2.2 L4.6 .6 V8.2 L2.2 5.8 H.4z" fill="#f4f8f8"/><path d="M5.8 2.6 Q7 4.4 5.8 6.2 M7.2 1.4 Q9.2 4.4 7.2 7.4" fill="none" stroke="#e8f0f0" stroke-width=".8"/></svg>
<svg style="left:510.6px;top:434.2px" width="9" height="9.2" viewBox="0 0 9 9.2"><rect x="2.6" y=".6" width="5.8" height="5" fill="none" stroke="#f0f6f6" stroke-width=".9"/><path d="M5.4 5.6 V7.6 M3.4 8 H7.6" stroke="#f0f6f6" stroke-width=".9"/><path d="M1.4 .4 V5 M.4 1.4 H2.4" stroke="#f0f6f6" stroke-width=".8"/><rect x="3.8" y="6.4" width="3.4" height="2.4" fill="#f0f6f6"/></svg>
<div class="t" id="esp" style="left:529px;top:435.5px;font-size:6.5px;color:#f2f6f6;transform:scaleX(.85);transform-origin:0 0">ESP</div>
<div class="t" id="clock1" style="display:inline-block;transform:scaleX(0.9244);transform-origin:0 0;left:553px;top:430.1px;font-size:7.3px;color:#f4f8f8">3:58 p. m.</div>
<div class="t" id="clock2" style="display:inline-block;transform:scaleX(0.9442);transform-origin:0 0;left:557px;top:440.4px;font-size:7.3px;color:#f4f8f8">29/5/19</div>
</div>
</div>
</body></html>
